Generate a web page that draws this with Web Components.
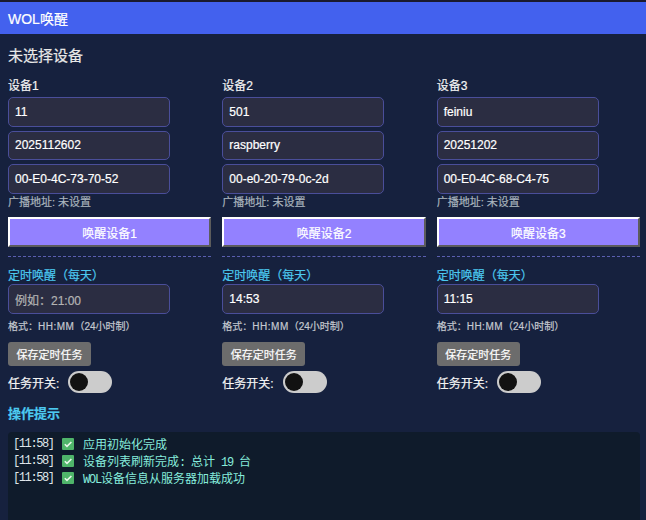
<!DOCTYPE html>
<html lang="zh">
<head>
<meta charset="utf-8">
<title>WOL唤醒</title>
<style>
  html, body { margin: 0; height: 520px; overflow: hidden; background: #16213e; }
  body {
    font-family: "Liberation Sans", "Noto Sans CJK SC", sans-serif; color: #e8e8e8;
    -webkit-text-stroke: 0.2px;
  }
</style>
</head>
<body>
<wol-app>
  <wol-device slot="devices" label="设备1" name="11" host="2025112602" mac="00-E0-4C-73-70-52" wake="唤醒设备1"></wol-device>
  <wol-device slot="devices" label="设备2" name="501" host="raspberry" mac="00-e0-20-79-0c-2d" wake="唤醒设备2" time="14:53"></wol-device>
  <wol-device slot="devices" label="设备3" name="feiniu" host="20251202" mac="00-E0-4C-68-C4-75" wake="唤醒设备3" time="11:15"></wol-device>
  <wol-log-line slot="log" time="[11:58]" msg="应用初始化完成"></wol-log-line>
  <wol-log-line slot="log" time="[11:58]" msg="设备列表刷新完成: 总计 19 台"></wol-log-line>
  <wol-log-line slot="log" time="[11:58]" msg="WOL设备信息从服务器加载成功"></wol-log-line>
</wol-app>

<script>
// Top level page shell: header, status line, device columns, log panel
class WolApp extends HTMLElement {
  constructor() {
    super();
    this.attachShadow({ mode: 'open' });
    this.shadowRoot.innerHTML = `
      <style>
        :host { display: block; padding-top: 2px; background: #1a1a2e; }
        header {
          height: 32px; box-sizing: border-box; padding: 0 8px;
          display: flex; align-items: center;
          background: #4361ee; color: #fff; font-size: 14px;
        }
        main { background: #16213e; padding: 12px 6px 0 8px; height: 474px; box-sizing: border-box; }
        h2 { margin: 0; font-size: 15px; line-height: 20px; font-weight: 400; color: #e8e8e8; }
        .devices { display: flex; gap: 11px; margin-top: 12px; }
        h3 { margin: 12px 0 0; font-size: 13px; line-height: 18px; font-weight: 700; color: #4cc9f0; }
        .log {
          margin-top: 9px; height: 100px; box-sizing: border-box; padding: 3px 5px;
          background: #0f1b2b; border-radius: 4px;
        }
      </style>
      <header>WOL唤醒</header>
      <main>
        <h2>未选择设备</h2>
        <div class="devices"><slot name="devices"></slot></div>
        <h3>操作提示</h3>
        <div class="log"><slot name="log"></slot></div>
      </main>`;
  }
}

// Boxed value, looks like a text input
class WolField extends HTMLElement {
  constructor() {
    super();
    this.attachShadow({ mode: 'open' });
    this.shadowRoot.innerHTML = `
      <style>
        :host {
          display: flex; align-items: center; box-sizing: border-box;
          width: 162px; height: 29.5px; padding: 0 6px;
          background: #2b2d42; border: 1px solid #4a4e9a; border-radius: 5px;
          color: #fff; font-size: 12px;
        }
        :host([placeholder]) { color: #b4b4b4; }
        :host([tall]) { height: 30px; }
      </style>
      <slot></slot>`;
  }
}

class WolSwitch extends HTMLElement {
  constructor() {
    super();
    this.attachShadow({ mode: 'open' });
    this.shadowRoot.innerHTML = `
      <style>
        :host {
          display: inline-flex; align-items: center; box-sizing: border-box;
          width: 44px; height: 22px; padding: 0 2px;
          background: #ccc; border-radius: 11px;
        }
        i { width: 18px; height: 18px; border-radius: 50%; background: #121212; }
      </style>
      <i></i>`;
  }
}

// One column of the device grid
class WolDevice extends HTMLElement {
  constructor() {
    super();
    this.attachShadow({ mode: 'open' });
  }

  connectedCallback() {
    const attr = (n) => this.getAttribute(n) || '';
    const time = attr('time');
    this.shadowRoot.innerHTML = `
      <style>
        :host { display: block; flex: 1 1 0; min-width: 0; font-size: 12px; }
        .label { line-height: 17px; margin-bottom: 2px; color: #f4f4f4; }
        .fields { display: flex; flex-direction: column; gap: 4px; }
        .addr { font-size: 11px; line-height: 16px; color: #a9b4bd; margin-bottom: 7.5px; }
        button {
          display: block; width: 100%; height: 30px; margin: 0; padding: 0;
          background: #9381ff; color: #fff; font: inherit;
          border-width: 2px; border-style: outset; border-color: #fff #b0b0b0 #b0b0b0 #fff;
        }
        .timer { margin-top: 9px; border-top: 1px dashed #5a5fb0; padding-top: 11px; }
        .timer-title { line-height: 16px; color: #4cc9f0; }
        .hint { font-size: 10px; line-height: 14px; margin: 6px 0 8px; color: #c4c8cf; }
        .hint span { letter-spacing: 0.5px; }
        .save {
          display: flex; align-items: center; justify-content: center;
          width: 83px; height: 24px; border-radius: 3px;
          background: #6c6c6c; color: #fff; font-size: 11px;
        }
        .switch-row { display: flex; align-items: center; margin-top: 5px; height: 22px; color: #f4f4f4; }
        wol-switch { margin-left: 9px; }
      </style>
      <div class="label">${attr('label')}</div>
      <div class="fields">
        <wol-field>${attr('name')}</wol-field>
        <wol-field>${attr('host')}</wol-field>
        <wol-field>${attr('mac')}</wol-field>
      </div>
      <div class="addr">广播地址: 未设置</div>
      <button type="button">${attr('wake')}</button>
      <div class="timer">
        <div class="timer-title">定时唤醒（每天）</div>
        ${time ? `<wol-field tall>${time}</wol-field>` : `<wol-field tall placeholder>例如：21:00</wol-field>`}
        <div class="hint">格式：<span>HH:MM</span>（24小时制）</div>
        <div class="save">保存定时任务</div>
        <div class="switch-row">任务开关:<wol-switch></wol-switch></div>
      </div>`;
  }
}

class WolLogLine extends HTMLElement {
  constructor() {
    super();
    this.attachShadow({ mode: 'open' });
  }

  connectedCallback() {
    // latin runs are squeezed to half the width of a CJK glyph, as in the panel's font
    const msg = this.getAttribute('msg').replace(/[\x20-\x7e]+/g, (m) => `<span class="latin">${m}</span>`);
    this.shadowRoot.innerHTML = `
      <style>
        :host {
          display: flex; align-items: center; height: 17px; white-space: pre;
          font-family: "Liberation Mono", "Noto Sans CJK SC", monospace; font-size: 12px;
          -webkit-text-stroke: 0;
        }
        .time { color: #dfe6ea; letter-spacing: -1.4px; width: 42px; }
        .latin { letter-spacing: -1.2px; }
        svg { margin: 0 9px 0 7px; flex: none; }
        .msg { color: #86ecdc; }
      </style>
      <span class="time">${this.getAttribute('time')}</span>
      <svg width="12" height="12" viewBox="0 0 12 12">
        <rect width="12" height="12" rx="1" fill="#4fb56a"/>
        <path d="M2.8 6.2l2.2 2.2L9.4 4" fill="none" stroke="#e8f7ea" stroke-width="1.6"/>
      </svg>
      <span class="msg">${msg}</span>`;
  }
}

customElements.define('wol-app', WolApp);
customElements.define('wol-field', WolField);
customElements.define('wol-switch', WolSwitch);
customElements.define('wol-device', WolDevice);
customElements.define('wol-log-line', WolLogLine);
</script>
</body>
</html>
